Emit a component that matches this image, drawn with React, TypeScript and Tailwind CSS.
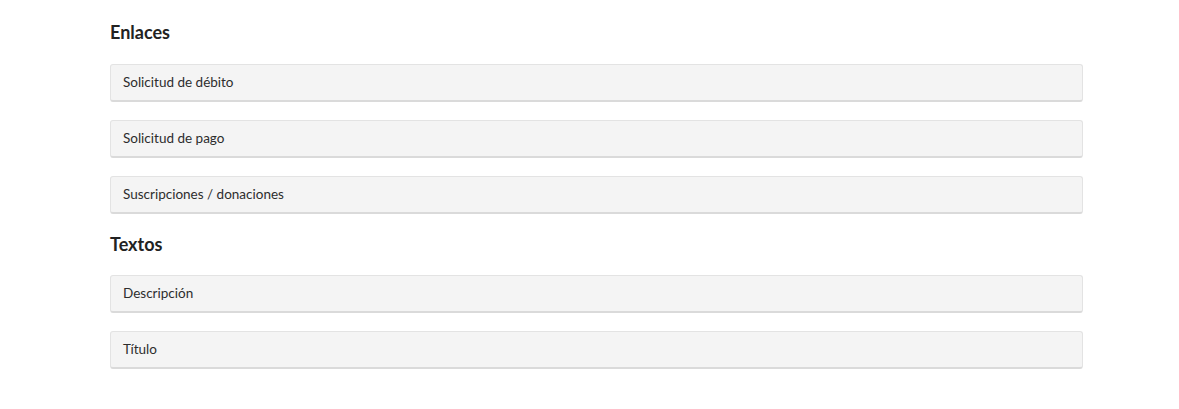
const enlaces = ["Solicitud de débito", "Solicitud de pago", "Suscripciones / donaciones"]
const textos = ["Descripción", "Título"]

function Row({ label }: { label: string }) {
  return (
    <div className="h-[38px] rounded-[3px] border border-[#e3e3e3] border-b-2 border-b-[#dadada] bg-[#f4f4f4] px-3 flex items-center text-[13.5px] text-[#2d2d2d]">
      {label}
    </div>
  )
}

export default function App() {
  return (
    <div className="min-h-[409px] bg-white font-['Lato','Open_Sans',sans-serif]">
      <div className="ml-[110px] w-[973px] pt-[21px]">
        <h2 className="text-[18px] font-bold text-[#222] leading-[22px]">Enlaces</h2>
        <div className="mt-[21px] flex flex-col gap-[18px]">
          {enlaces.map((l) => (
            <Row key={l} label={l} />
          ))}
        </div>
        <h2 className="mt-[19px] text-[18px] font-bold text-[#222] leading-[22px]">Textos</h2>
        <div className="mt-[20px] flex flex-col gap-[18px]">
          {textos.map((l) => (
            <Row key={l} label={l} />
          ))}
        </div>
      </div>
    </div>
  )
}
